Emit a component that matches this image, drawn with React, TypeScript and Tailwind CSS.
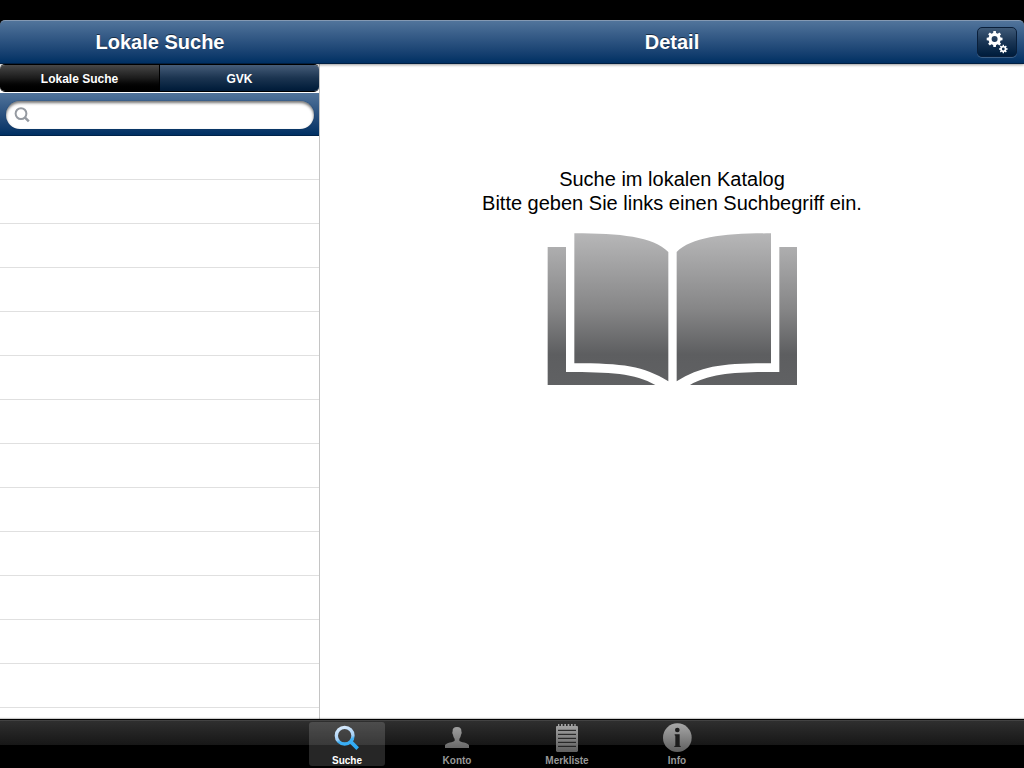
import { useState } from 'react';
import type { ReactNode } from 'react';

function gearPath(cx: number, cy: number, outer: number, inner: number, hole: number, teeth: number) {
  const step = (Math.PI * 2) / teeth;
  const at = (r: number, a: number) =>
    `${(cx + r * Math.sin(a)).toFixed(2)} ${(cy - r * Math.cos(a)).toFixed(2)}`;
  const points: string[] = [];
  for (let i = 0; i < teeth; i++) {
    const a = i * step;
    points.push(at(inner, a - step * 0.3), at(outer, a - step * 0.2), at(outer, a + step * 0.2), at(inner, a + step * 0.3));
  }
  return `M${points.join('L')}Z M${cx - hole} ${cy}a${hole} ${hole} 0 1 0 ${hole * 2} 0a${hole} ${hole} 0 1 0 ${-hole * 2} 0Z`;
}

function GearsIcon() {
  return (
    <svg viewBox="0 0 38 28" className="h-full w-full" aria-hidden="true">
      <g fill="#fff" fillRule="evenodd">
        <path d={gearPath(16.6, 11, 8, 6.2, 3, 8)} />
        <path d={gearPath(25.3, 21, 4.3, 3.2, 1.4, 8)} />
      </g>
    </svg>
  );
}

function BookIcon() {
  return (
    <svg viewBox="51 39 750 456" className="h-[152px] w-[250px]" aria-hidden="true">
      <defs>
        <linearGradient id="book" gradientUnits="userSpaceOnUse" x1="0" y1="39" x2="0" y2="495">
          <stop offset="0" stopColor="#b7b7b8" />
          <stop offset="0.5" stopColor="#868687" />
          <stop offset="0.8" stopColor="#5d5e60" />
          <stop offset="1" stopColor="#606163" />
        </linearGradient>
      </defs>
      <g fill="url(#book)">
        <path d="M133 40C270 40 370 50 415 96V484C340 438 280 430 133 430Z" />
        <path d="M723 40C586 40 486 50 440 96V484C515 438 575 430 723 430Z" />
        <path d="M53 81H108V456C240 456 315 460 376 495H53Z" />
        <path d="M801 81H748V456C616 456 541 460 480 495H801Z" />
      </g>
    </svg>
  );
}

function TabIcon({ children }: { children: ReactNode }) {
  return (
    <svg viewBox="0 0 90 90" className="h-[30px] w-[30px] shrink-0" aria-hidden="true">
      <defs>
        <linearGradient id="tabGray" gradientUnits="userSpaceOnUse" x1="0" y1="0" x2="0" y2="90">
          <stop offset="0" stopColor="#a9a9a9" />
          <stop offset="1" stopColor="#5c5c5c" />
        </linearGradient>
        <linearGradient id="tabBlue" gradientUnits="userSpaceOnUse" x1="28" y1="8" x2="48" y2="80">
          <stop offset="0" stopColor="#dcecfc" />
          <stop offset="0.5" stopColor="#a5d0f7" />
          <stop offset="0.62" stopColor="#3fb0f5" />
          <stop offset="1" stopColor="#2ba9f3" />
        </linearGradient>
      </defs>
      {children}
    </svg>
  );
}

const tabs = [
  {
    label: 'Suche',
    icon: (
      <g fill="none" stroke="url(#tabBlue)">
        <circle cx="38" cy="38" r="25" strokeWidth="10" />
        <path d="M56 56L77 77" strokeWidth="11" />
      </g>
    ),
  },
  {
    label: 'Konto',
    icon: (
      <path
        fill="url(#tabGray)"
        d="M45 12C35 12 31 17 32 25C30 27 31 33 33 35C34 41 36 45 38 47V53C36 58 11 58 9 67V75H81V67C79 58 54 58 52 53V47C54 45 56 41 57 35C59 33 60 27 58 25C59 17 55 12 45 12Z"
      />
    ),
  },
  {
    label: 'Merkliste',
    icon: (
      <>
        <path
          fill="url(#tabGray)"
          d="M12 11L14 9H18V3H22V9H27V3H32V9H37V3H42V9H47V3H52V9H57V3H62V9H67V3H71V9H76L78 11V84L75 87H15L12 84Z"
        />
        <path d="M18 22H72M18 34H72M18 46H72M18 58H72M18 70H72" stroke="#171717" strokeWidth="3" />
      </>
    ),
  },
  {
    label: 'Info',
    icon: (
      <>
        <circle cx="46" cy="44" r="43" fill="url(#tabGray)" />
        <circle cx="46" cy="21" r="7" fill="#1c1c1c" />
        <path d="M38 34H53V68L56 69V72H37V69L40 68V38L38 37Z" fill="#1c1c1c" />
      </>
    ),
  },
];

export default function App() {
  const [scope, setScope] = useState('Lokale Suche');
  const [tab, setTab] = useState('Suche');

  return (
    <div className="flex h-screen flex-col overflow-hidden bg-black font-['Liberation_Sans',Arial,sans-serif]">
      <header className="relative z-10 mt-5 flex h-11 shrink-0 rounded-t-[5px] border-t border-b border-t-[#8499b3] border-b-[#001f42] bg-linear-to-b from-[#51749b] to-[#003063] text-xl font-bold text-white shadow-[0_1px_3px_rgba(0,0,0,0.4)] text-shadow-[0_-1px_0_rgba(0,0,0,0.5)]">
        <h1 className="flex w-80 shrink-0 items-center justify-center">Lokale Suche</h1>
        <div className="grid flex-1 grid-cols-[1fr_auto_1fr] items-center">
          <h2 className="col-start-2">Detail</h2>
          <button
            type="button"
            aria-label="Einstellungen"
            className="mr-[7px] h-[30px] w-10 justify-self-end rounded-[5px] border border-[#0a1f3a] bg-linear-to-b from-[#3f5a78] via-[#1a3554] to-[#001c3c] shadow-[0_1px_0_rgba(255,255,255,0.2)]"
          >
            <GearsIcon />
          </button>
        </div>
      </header>

      <div className="flex min-h-0 flex-1 bg-white">
        <aside className="flex w-80 shrink-0 flex-col overflow-hidden border-r border-[#c4c4c4]">
          <div className="relative z-20 mb-px flex h-7 shrink-0 overflow-hidden rounded-[5px] border-y border-black text-xs font-bold text-white text-shadow-[0_-1px_0_rgba(0,0,0,0.6)]">
            <button
              type="button"
              aria-pressed={scope === 'Lokale Suche'}
              onClick={() => setScope('Lokale Suche')}
              className="flex-1 border-r border-black bg-linear-to-b from-[#484848] via-[#1c1c1c] to-black pt-0.5"
            >
              Lokale Suche
            </button>
            <button
              type="button"
              aria-pressed={scope === 'GVK'}
              onClick={() => setScope('GVK')}
              className="flex-1 bg-linear-to-b from-[#465d79] via-[#1b3450] to-[#001a38] pt-0.5"
            >
              GVK
            </button>
          </div>
          <div className="flex h-[43px] shrink-0 items-center border-b border-[#00234a] bg-linear-to-b from-[#51749b] to-[#003063] pt-0.5 pr-[5px] pl-[6px]">
            <label className="flex h-7 flex-1 items-center rounded-full bg-white pl-2 shadow-[inset_0_2px_3px_rgba(0,0,0,0.55),0_0_1px_#002a57]">
              <svg viewBox="0 0 16 16" className="h-4 w-4" aria-hidden="true">
                <g fill="none" stroke="#959aa1" strokeWidth="2">
                  <circle cx="7" cy="6.6" r="5.4" />
                  <path d="M10.8 10.4L14.8 14.4" strokeWidth="2.5" />
                </g>
              </svg>
              <input type="search" aria-label="Suchbegriff" className="min-w-0 flex-1 bg-transparent px-2 text-sm text-black outline-none" />
            </label>
          </div>
          <ul className="min-h-0 flex-1 overflow-hidden">
            {Array.from({ length: 30 }, (_, i) => (
              <li key={i} className="h-11 border-b border-[#e0e0e0]" />
            ))}
          </ul>
        </aside>

        <main className="flex flex-1 flex-col items-center pt-[103px]">
          <p className="text-center text-xl leading-6 text-black">
            Suche im lokalen Katalog
            <br />
            Bitte geben Sie links einen Suchbegriff ein.
          </p>
          <div className="mt-[18px]">
            <BookIcon />
          </div>
        </main>
      </div>

      <nav className="relative flex h-[49px] shrink-0 justify-center gap-[34px] border-t border-black bg-linear-to-b from-[#303030] from-0% via-[#171717] via-52% to-black to-52% pt-[2px] shadow-[inset_0_1px_0_#434343,0_-1px_1px_rgba(0,0,0,0.2)]">
        {tabs.map(({ label, icon }) => (
          <button
            key={label}
            type="button"
            onClick={() => setTab(label)}
            className={
              tab === label
                ? 'flex h-11 w-[76px] flex-col items-center rounded-[3px] bg-white/15 pt-px text-[10px] leading-3 font-bold text-white'
                : 'flex h-11 w-[76px] flex-col items-center rounded-[3px] pt-px text-[10px] leading-3 font-bold text-[#989898]'
            }
          >
            <TabIcon>{icon}</TabIcon>
            <span className="mt-0.5">{label}</span>
          </button>
        ))}
      </nav>
    </div>
  );
}
